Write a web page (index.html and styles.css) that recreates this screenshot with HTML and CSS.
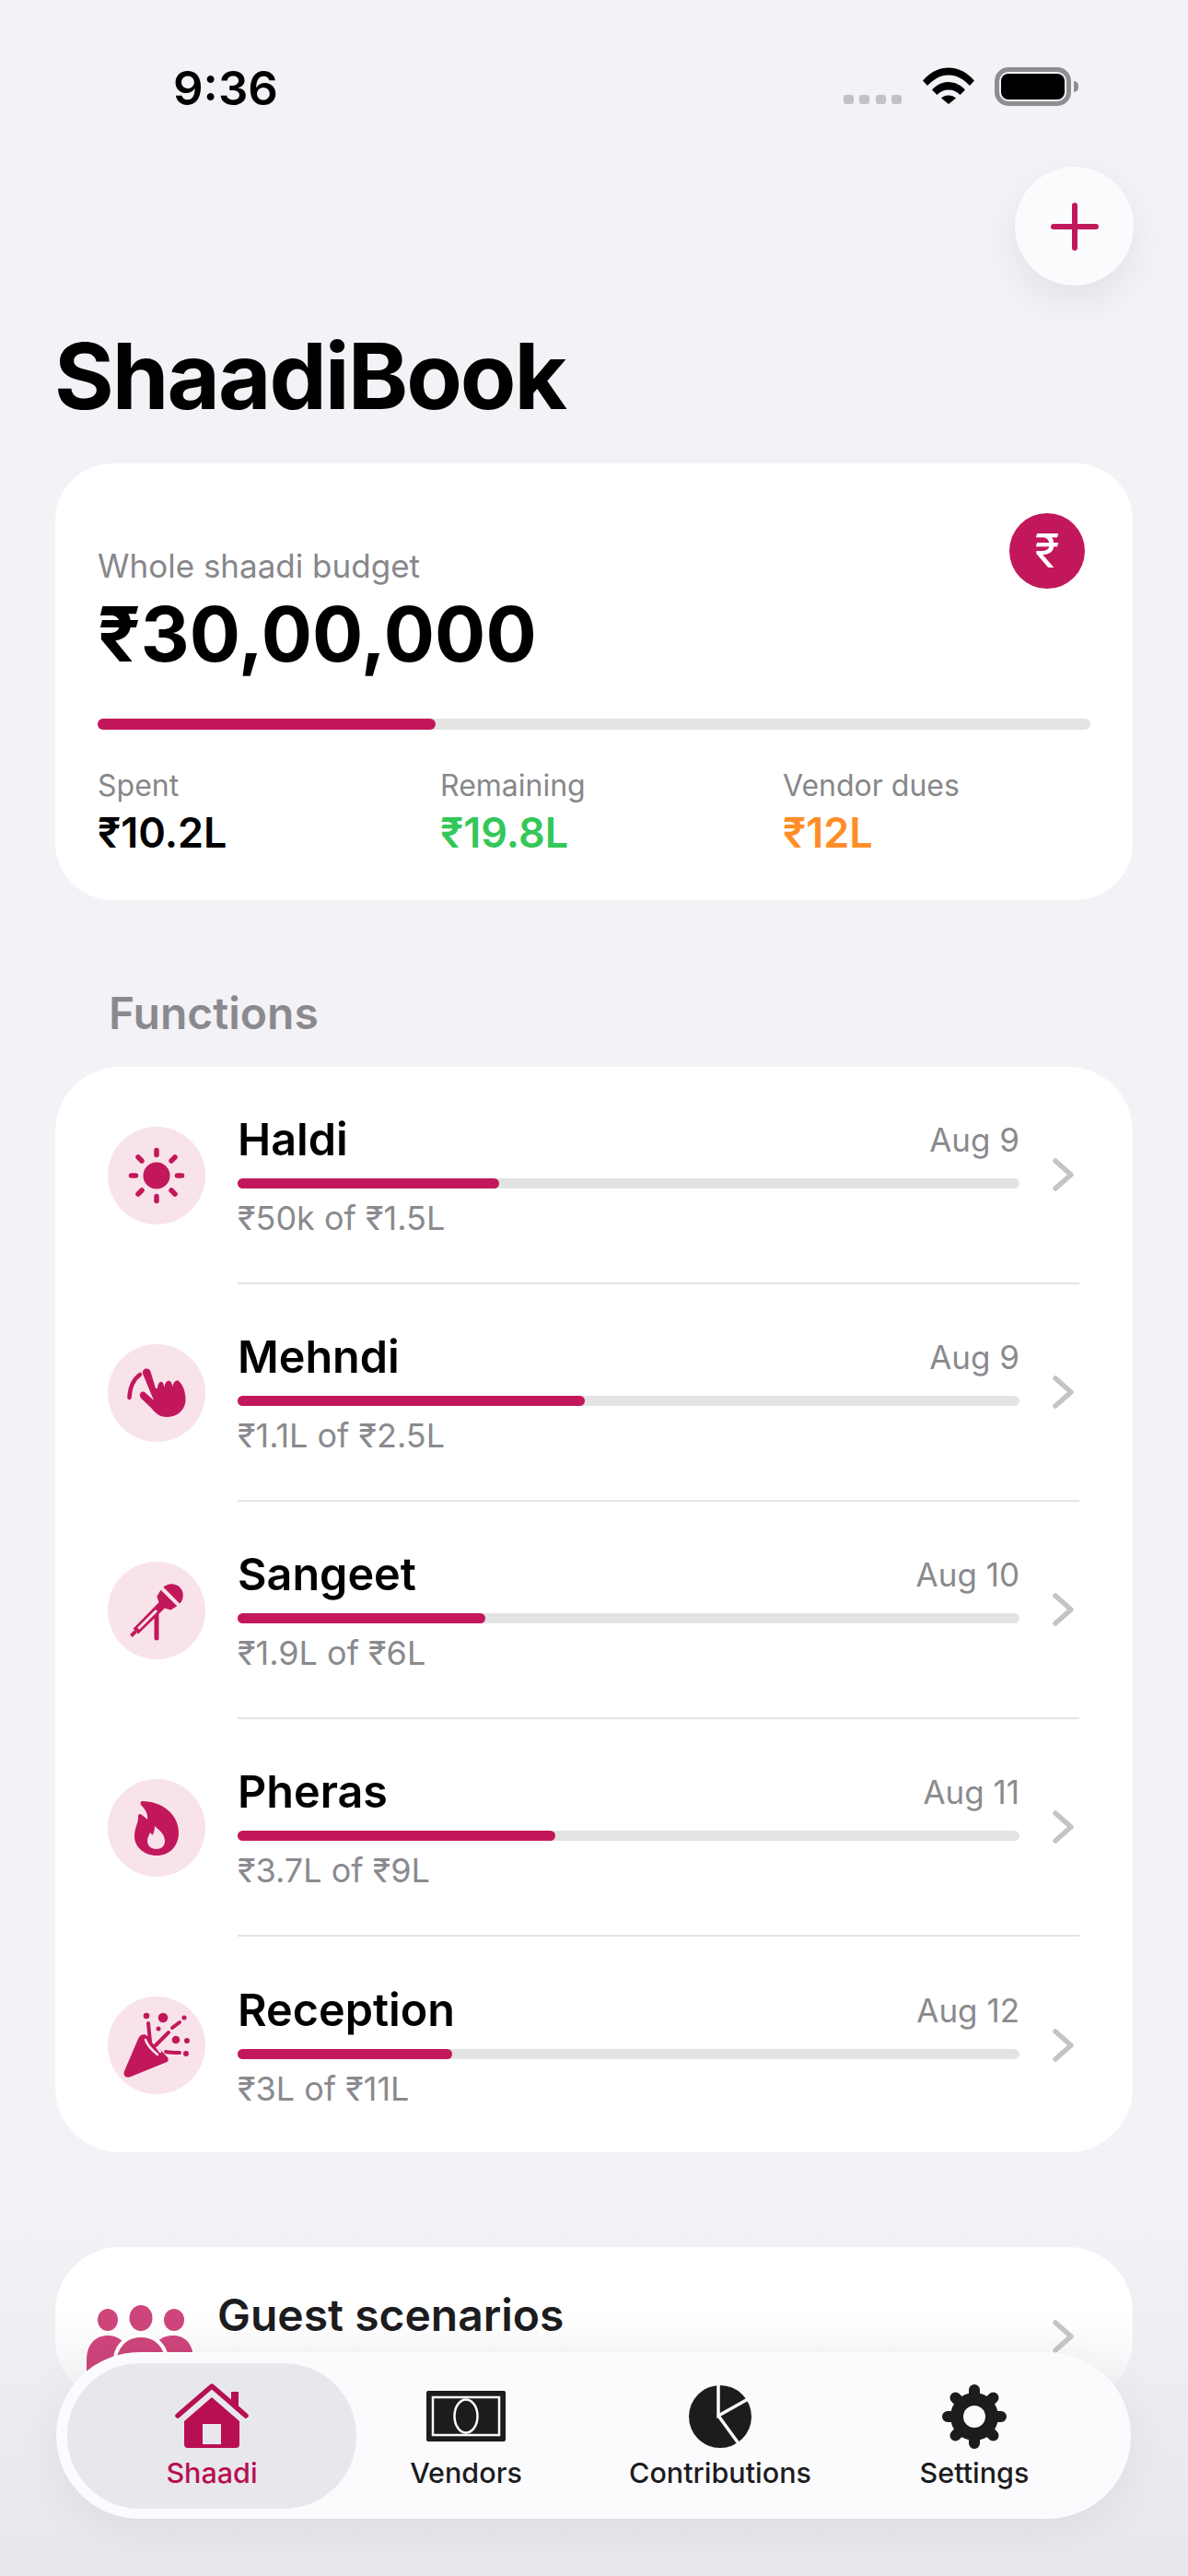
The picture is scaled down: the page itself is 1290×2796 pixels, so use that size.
FILE: index.html
```html
<!DOCTYPE html>
<html lang="en">
<head>
  <meta charset="UTF-8" />
  <meta name="viewport" content="width=device-width, initial-scale=1.0"/>
  <title>ShaadiBook</title>
  <link rel="stylesheet" href="styles.css">
</head>
<body>
  <div class="phone">
    <header class="status-bar">
      <span class="time">9:36</span>
      <div class="status-icons">
        <div class="signal"><i></i><i></i><i></i><i></i></div>
        <svg class="wifi" viewBox="0 0 56 40">
          <path d="M0 14.5C7.5 6 17 .5 28 .5S48.5 6 56 14.5l-5 5.5C44.5 13 37 8.5 28 8.5S11.5 13 5 20z"/>
          <path d="M10 24.5C14.5 19.5 21 16 28 16s13.5 3.5 18 8.5L40.5 30C37.5 26.5 33 24.5 28 24.5S18.5 26.5 15.5 30z"/>
          <path d="M20 33.5C22 31.5 25 30.5 28 30.5s6 1 8 3L28 40z"/>
        </svg>
        <div class="battery"><div class="battery-level"></div></div>
        <div class="battery-cap"></div>
      </div>
    </header>

    <div class="top-actions">
      <button class="add-btn">
        <svg viewBox="0 0 52 52" width="52" height="52"><path d="M26 3v46M3 26h46" fill="none" stroke="#c2185b" stroke-width="6" stroke-linecap="round"/></svg>
      </button>
    </div>

    <h1 class="app-title">ShaadiBook</h1>

    <section class="budget-card">
      <div class="budget-top">
        <div>
          <div class="budget-label">Whole shaadi budget</div>
          <div class="budget-amount">₹30,00,000</div>
        </div>
        <div class="rupee-badge">₹</div>
      </div>
      <div class="bar bar-big"><div class="bar-fill" style="width: 34%"></div></div>
      <div class="budget-stats">
        <div class="stat">
          <div class="stat-label">Spent</div>
          <div class="stat-value">₹10.2L</div>
        </div>
        <div class="stat">
          <div class="stat-label">Remaining</div>
          <div class="stat-value green">₹19.8L</div>
        </div>
        <div class="stat">
          <div class="stat-label">Vendor dues</div>
          <div class="stat-value orange">₹12L</div>
        </div>
      </div>
    </section>

    <h2 class="section-title">Functions</h2>

    <section class="fn-list">
      <div class="fn-row">
        <div class="fn-icon">
          <svg viewBox="0 0 106 106">
            <circle cx="53" cy="53" r="14.5" fill="#c2185b"/>
            <path d="M53 25.5v5M53 75.5v5M25.5 53h5M75.5 53h5M33 33l4 4M73 33l-4 4M33 73l4-4M73 73l-4-4" fill="none" stroke="#c2185b" stroke-width="5.5" stroke-linecap="round"/>
          </svg>
        </div>
        <div class="fn-main">
          <div class="fn-info">
            <div class="fn-head"><span class="fn-name">Haldi</span><span class="fn-date">Aug 9</span></div>
            <div class="bar"><div class="bar-fill" style="width: 33.4%"></div></div>
            <div class="fn-sub">₹50k of ₹1.5L</div>
          </div>
          <svg class="chevron" viewBox="0 0 26 38"><path d="M4 4l17 15L4 34" fill="none" stroke="#c4c4c6" stroke-width="5.5" stroke-linecap="round" stroke-linejoin="round"/></svg>
        </div>
      </div>

      <div class="fn-row">
        <div class="fn-icon">
          <svg viewBox="0 0 106 106">
            <path d="M38 32a4.4 4.4 0 0 1 8.5-2.3L52 48h2C54 42 58 39 60 42l1.5 5C62 40 67 38 69 41.5l1.5 4.500C71 40 76 38 78 41 82 45 84.5 52 84.5 60 84.5 71 76 79 64 79 56 79 51 74 47 69L36 58.5C33 55 36 50 40 52l10 9z" fill="#c2185b"/>
            <path d="M35 33C28 38 24 47 23.5 58" fill="none" stroke="#c2185b" stroke-width="4.5" stroke-linecap="round"/>
          </svg>
        </div>
        <div class="fn-main">
          <div class="fn-info">
            <div class="fn-head"><span class="fn-name">Mehndi</span><span class="fn-date">Aug 9</span></div>
            <div class="bar"><div class="bar-fill" style="width: 44.4%"></div></div>
            <div class="fn-sub">₹1.1L of ₹2.5L</div>
          </div>
          <svg class="chevron" viewBox="0 0 26 38"><path d="M4 4l17 15L4 34" fill="none" stroke="#c4c4c6" stroke-width="5.5" stroke-linecap="round" stroke-linejoin="round"/></svg>
        </div>
      </div>

      <div class="fn-row">
        <div class="fn-icon">
          <svg viewBox="0 0 106 106">
            <path d="M53 58v25" fill="none" stroke="#c2185b" stroke-width="5" stroke-linecap="round"/>
            <g transform="translate(70 36) rotate(45)" fill="#c2185b">
              <path d="M-12.5 1a12.5 12.5 0 0 1 25 0z"/>
              <path d="M-12.5 5h25l-2 8-6 3-.5 40h-8l-.5-40-6-3z"/>
              <rect x="-2" y="56" width="4" height="7"/>
              <rect x="-1.5" y="24" width="3" height="28" fill="#f8e3ea"/>
            </g>
          </svg>
        </div>
        <div class="fn-main">
          <div class="fn-info">
            <div class="fn-head"><span class="fn-name">Sangeet</span><span class="fn-date">Aug 10</span></div>
            <div class="bar"><div class="bar-fill" style="width: 31.7%"></div></div>
            <div class="fn-sub">₹1.9L of ₹6L</div>
          </div>
          <svg class="chevron" viewBox="0 0 26 38"><path d="M4 4l17 15L4 34" fill="none" stroke="#c4c4c6" stroke-width="5.5" stroke-linecap="round" stroke-linejoin="round"/></svg>
        </div>
      </div>

      <div class="fn-row">
        <div class="fn-icon">
          <svg viewBox="0 0 106 106">
            <path d="M37 24C36 24 35 26 36 28C40 32 44 37 43 44C41 42 38 39 35 38C33 38 33 40 33 42C33 48 29 53 29 62C29 74 40 83 53 83C67 83 77 73 77 58C77 39 60 24 37 24Z" fill="#c2185b"/>
            <path d="M51 51C54 54 62 59 62 67C62 73 58 76 52.5 76C47 76 43 72 43 67C43 63 45 61 46 58C47 59 48 60 48.5 61C50 58 51 55 51 51Z" fill="#f8e3ea"/>
          </svg>
        </div>
        <div class="fn-main">
          <div class="fn-info">
            <div class="fn-head"><span class="fn-name">Pheras</span><span class="fn-date">Aug 11</span></div>
            <div class="bar"><div class="bar-fill" style="width: 40.6%"></div></div>
            <div class="fn-sub">₹3.7L of ₹9L</div>
          </div>
          <svg class="chevron" viewBox="0 0 26 38"><path d="M4 4l17 15L4 34" fill="none" stroke="#c4c4c6" stroke-width="5.5" stroke-linecap="round" stroke-linejoin="round"/></svg>
        </div>
      </div>

      <div class="fn-row">
        <div class="fn-icon">
          <svg viewBox="0 0 106 106">
            <path d="M18 81L33 46c2-5 7-6 10-3l21 22c3 3 2 6-2 7L25 87c-5 2-9-1-7-6z" fill="#c2185b"/>
            <path d="M41 47c2 6 8 12 13 16M47 46l10 14" fill="none" stroke="#f8e3ea" stroke-width="2.5" stroke-linecap="round"/>
            <path d="M44 29l2 20M52 53l14-14M70 34l8-6M63 60c5 1 10 1 15 1" fill="none" stroke="#c2185b" stroke-width="4" stroke-linecap="round"/>
            <g fill="#c2185b">
              <circle cx="42" cy="21" r="3.3"/>
              <circle cx="60" cy="23" r="5.3"/>
              <circle cx="83" cy="23" r="2.6"/>
              <circle cx="55" cy="35" r="2.5"/>
              <circle cx="74" cy="47" r="4.3"/>
              <circle cx="86" cy="48" r="3"/>
              <circle cx="85" cy="62" r="3"/>
            </g>
          </svg>
        </div>
        <div class="fn-main last">
          <div class="fn-info">
            <div class="fn-head"><span class="fn-name">Reception</span><span class="fn-date">Aug 12</span></div>
            <div class="bar"><div class="bar-fill" style="width: 27.5%"></div></div>
            <div class="fn-sub">₹3L of ₹11L</div>
          </div>
          <svg class="chevron" viewBox="0 0 26 38"><path d="M4 4l17 15L4 34" fill="none" stroke="#c4c4c6" stroke-width="5.5" stroke-linecap="round" stroke-linejoin="round"/></svg>
        </div>
      </div>
    </section>

    <section class="guest-card">
      <svg class="guest-icon" viewBox="0 0 116 92">
        <g fill="#c2185b">
          <ellipse cx="23" cy="16" rx="11" ry="12"/>
          <ellipse cx="59" cy="14" rx="12.5" ry="14"/>
          <ellipse cx="95" cy="16" rx="11" ry="12"/>
          <path d="M0 60C0 42 10 33 23 33c13 0 23 9 23 27v20H0z"/>
          <path d="M70 60c0-18 10-27 24-27 13 0 22 9 22 27v20H70z"/>
          <path d="M30 66c0-22 13-33 29-33s29 11 29 33v20H30z" stroke="#fff" stroke-width="4"/>
        </g>
      </svg>
      <div class="guest-title">Guest scenarios</div>
      <svg class="chevron guest-chevron" viewBox="0 0 26 38"><path d="M4 4l17 15L4 34" fill="none" stroke="#c4c4c6" stroke-width="5.5" stroke-linecap="round" stroke-linejoin="round"/></svg>
    </section>

    <nav class="tab-bar">
      <div class="tab active">
        <svg class="tab-icon" viewBox="0 0 80 72">
          <path d="M3 35L40 3l37 32" fill="none" stroke="#b70f52" stroke-width="5.5" stroke-linecap="round" stroke-linejoin="round"/>
          <path d="M61 9h8v22l-8-7z" fill="#b70f52"/>
          <path fill-rule="evenodd" d="M40 15l30 26v25a4 4 0 0 1-4 4H14a4 4 0 0 1-4-4V41zM30 44v22h20V44z" fill="#b70f52"/>
        </svg>
        <span class="tab-label">Shaadi</span>
      </div>
      <div class="tab">
        <svg class="tab-icon" viewBox="0 0 88 72">
          <rect x="1" y="8" width="86" height="55" rx="2" fill="#1c1c1e"/>
          <rect x="8" y="15" width="72" height="41" fill="none" stroke="#fbfbfe" stroke-width="2.5"/>
          <ellipse cx="44" cy="35.5" rx="12.5" ry="18" fill="none" stroke="#fbfbfe" stroke-width="2.5"/>
        </svg>
        <span class="tab-label">Vendors</span>
      </div>
      <div class="tab">
        <svg class="tab-icon" viewBox="0 0 72 72">
          <circle cx="36" cy="36" r="34" fill="#1c1c1e"/>
          <path d="M34 0v35l34-19M34 35l24 33" fill="none" stroke="#fbfbfe" stroke-width="3.5"/>
        </svg>
        <span class="tab-label">Contributions</span>
      </div>
      <div class="tab">
        <svg class="tab-icon" viewBox="0 0 72 72">
          <circle cx="36" cy="36" r="26" fill="#1c1c1e"/>
          <g stroke="#1c1c1e" stroke-width="12" stroke-linecap="round">
            <path d="M36 7v58M7 36h58M15.5 15.5l41 41M56.5 15.5l-41 41"/>
          </g>
          <circle cx="36" cy="36" r="12" fill="#fbfbfe"/>
        </svg>
        <span class="tab-label">Settings</span>
      </div>
    </nav>
  </div>
</body>
</html>
```

FILE: styles.css
```css
* {
  margin: 0;
  padding: 0;
  box-sizing: border-box;
  font-family: Inter, "Noto Sans", sans-serif;
}

body {
  background-color: #f2f2f7;
  color: #000;
}

.phone {
  position: relative;
  width: 1290px;
  height: 2796px;
  overflow: hidden;
  background: linear-gradient(to bottom, #f2f2f7 2380px, #ececf1 2600px, #e7e7ec 2796px);
}

/* status bar */
.status-bar {
  display: flex;
  justify-content: space-between;
  height: 181px;
  padding: 65px 119px 0 188px;
}

.time {
  font-size: 51px;
  font-weight: 600;
  line-height: 62px;
}

.status-icons {
  display: flex;
  align-items: flex-start;
  padding-top: 8px;
}

.signal {
  display: flex;
  gap: 6.5px;
  margin-top: 30px;
  margin-right: 23px;
}

.signal i {
  display: block;
  width: 11px;
  height: 10px;
  border-radius: 3px;
  background-color: #c1c1c6;
}

.wifi {
  width: 56px;
  height: 40px;
  margin-right: 22px;
}

.battery {
  width: 83px;
  height: 42px;
  padding: 2px;
  border: 5px solid #8e8e92;
  border-radius: 15px;
}

.battery-level {
  width: 100%;
  height: 100%;
  border-radius: 8px;
  background-color: #000;
}

.battery-cap {
  width: 5px;
  height: 12px;
  margin-top: 15px;
  margin-left: 3px;
  border-radius: 0 5px 5px 0;
  background-color: #8e8e92;
}

/* header */
.top-actions {
  display: flex;
  justify-content: flex-end;
  padding-right: 59px;
}

.add-btn {
  display: flex;
  align-items: center;
  justify-content: center;
  width: 129px;
  height: 129px;
  border: none;
  border-radius: 50%;
  background-color: #fbfbfe;
  box-shadow: 0 16px 44px rgba(0, 0, 0, 0.07);
}

.app-title {
  margin-top: 39px;
  margin-left: 59px;
  font-size: 99px;
  font-weight: 700;
  line-height: 118px;
  letter-spacing: -2px;
}

/* budget */
.budget-card {
  height: 474px;
  margin: 36px 60px 0;
  padding: 54px 46px 0;
  border-radius: 62px;
  background-color: #fff;
}

.budget-top {
  display: flex;
  justify-content: space-between;
  align-items: flex-start;
}

.budget-label {
  margin-top: 35px;
  font-size: 35px;
  line-height: 44px;
  color: #87878b;
}

.budget-amount {
  margin-top: 3px;
  font-size: 82px;
  font-weight: 700;
  line-height: 100px;
}

.rupee-badge {
  display: flex;
  align-items: center;
  justify-content: center;
  width: 82px;
  height: 82px;
  margin-right: 6px;
  border-radius: 50%;
  background-color: #c2185b;
  color: #fff;
  font-size: 50px;
}

.bar {
  height: 11px;
  border-radius: 6px;
  background-color: #e3e3e3;
}

.bar-big {
  height: 12px;
  margin-top: 41px;
}

.bar-fill {
  height: 100%;
  border-radius: 6px;
  background-color: #c2185b;
}

.budget-stats {
  display: flex;
  margin-top: 41px;
}

.stat {
  flex: 0 0 372px;
}

.stat-label {
  font-size: 32px;
  line-height: 40px;
  color: #87878b;
}

.stat-value {
  margin-top: 6px;
  font-size: 45px;
  font-weight: 600;
  line-height: 50px;
}

.green {
  color: #34c759;
}

.orange {
  color: #ff8d28;
}

/* functions */
.section-title {
  margin-top: 93px;
  margin-left: 118px;
  font-size: 48px;
  font-weight: 600;
  line-height: 60px;
  color: #8a8a8e;
}

.fn-list {
  height: 1178px;
  margin: 29px 60px 0;
  padding-right: 58px;
  padding-left: 57px;
  border-radius: 70px;
  background-color: #fff;
}

.fn-row {
  display: flex;
  align-items: center;
  height: 236px;
}

.fn-row:first-child {
  margin-top: -1px;
}

.fn-icon {
  flex-shrink: 0;
  width: 106px;
  height: 106px;
  margin-right: 35px;
  border-radius: 50%;
  background-color: #f8e3ea;
}

.fn-icon svg {
  display: block;
  width: 106px;
  height: 106px;
}

.fn-main {
  display: flex;
  flex: 1;
  align-items: center;
  height: 100%;
  border-bottom: 2px solid #e3e3e5;
}

.fn-main.last {
  border-bottom: none;
}

.fn-info {
  width: 849px;
}

.fn-head {
  display: flex;
  justify-content: space-between;
  align-items: center;
  height: 60px;
  margin-bottom: 12px;
}

.fn-name {
  font-size: 48.5px;
  font-weight: 600;
  line-height: 60px;
}

.fn-date {
  font-size: 35px;
  color: #8a8a8e;
}

.fn-sub {
  margin-top: 10px;
  font-size: 36px;
  line-height: 44px;
  color: #8a8a8e;
}

.chevron {
  flex-shrink: 0;
  width: 26px;
  height: 38px;
  margin-left: 35px;
}

/* guest scenarios */
.guest-card {
  display: flex;
  align-items: flex-start;
  height: 170px;
  margin: 103px 60px 0;
  padding: 42px 62px 0 34px;
  border-radius: 70px;
  background: linear-gradient(to bottom, #fff 40%, #f8f8fa 70%, #f0f0f4 100%);
}

.guest-icon {
  flex-shrink: 0;
  width: 116px;
  height: 92px;
  margin-top: 21px;
  opacity: 0.8;
}

.guest-title {
  flex: 1;
  margin-left: 26px;
  font-size: 48px;
  font-weight: 600;
  line-height: 64px;
  color: #1c1c1e;
}

.guest-chevron {
  margin-top: 36px;
}

/* bottom bar */
.tab-bar {
  position: absolute;
  left: 61px;
  top: 2553px;
  display: grid;
  grid-template-columns: repeat(4, 276px);
  width: 1167px;
  height: 181px;
  padding: 0 31px;
  border-radius: 91px;
  background-color: #fbfbfe;
  box-shadow: 0 12px 50px rgba(0, 0, 0, 0.06);
}

.tab {
  position: relative;
  display: flex;
  flex-direction: column;
  align-items: center;
  padding-top: 34px;
}

.tab.active::before {
  content: "";
  position: absolute;
  top: 12px;
  bottom: 11px;
  left: -19px;
  right: -19px;
  border-radius: 79px;
  background-color: #e8e8ec;
}

.tab-icon {
  position: relative;
  height: 72px;
}

.tab-label {
  position: relative;
  margin-top: 6px;
  font-size: 30.5px;
  font-weight: 500;
  line-height: 38px;
  color: #1c1c1e;
}

.tab.active .tab-label {
  color: #b70f52;
}
```
